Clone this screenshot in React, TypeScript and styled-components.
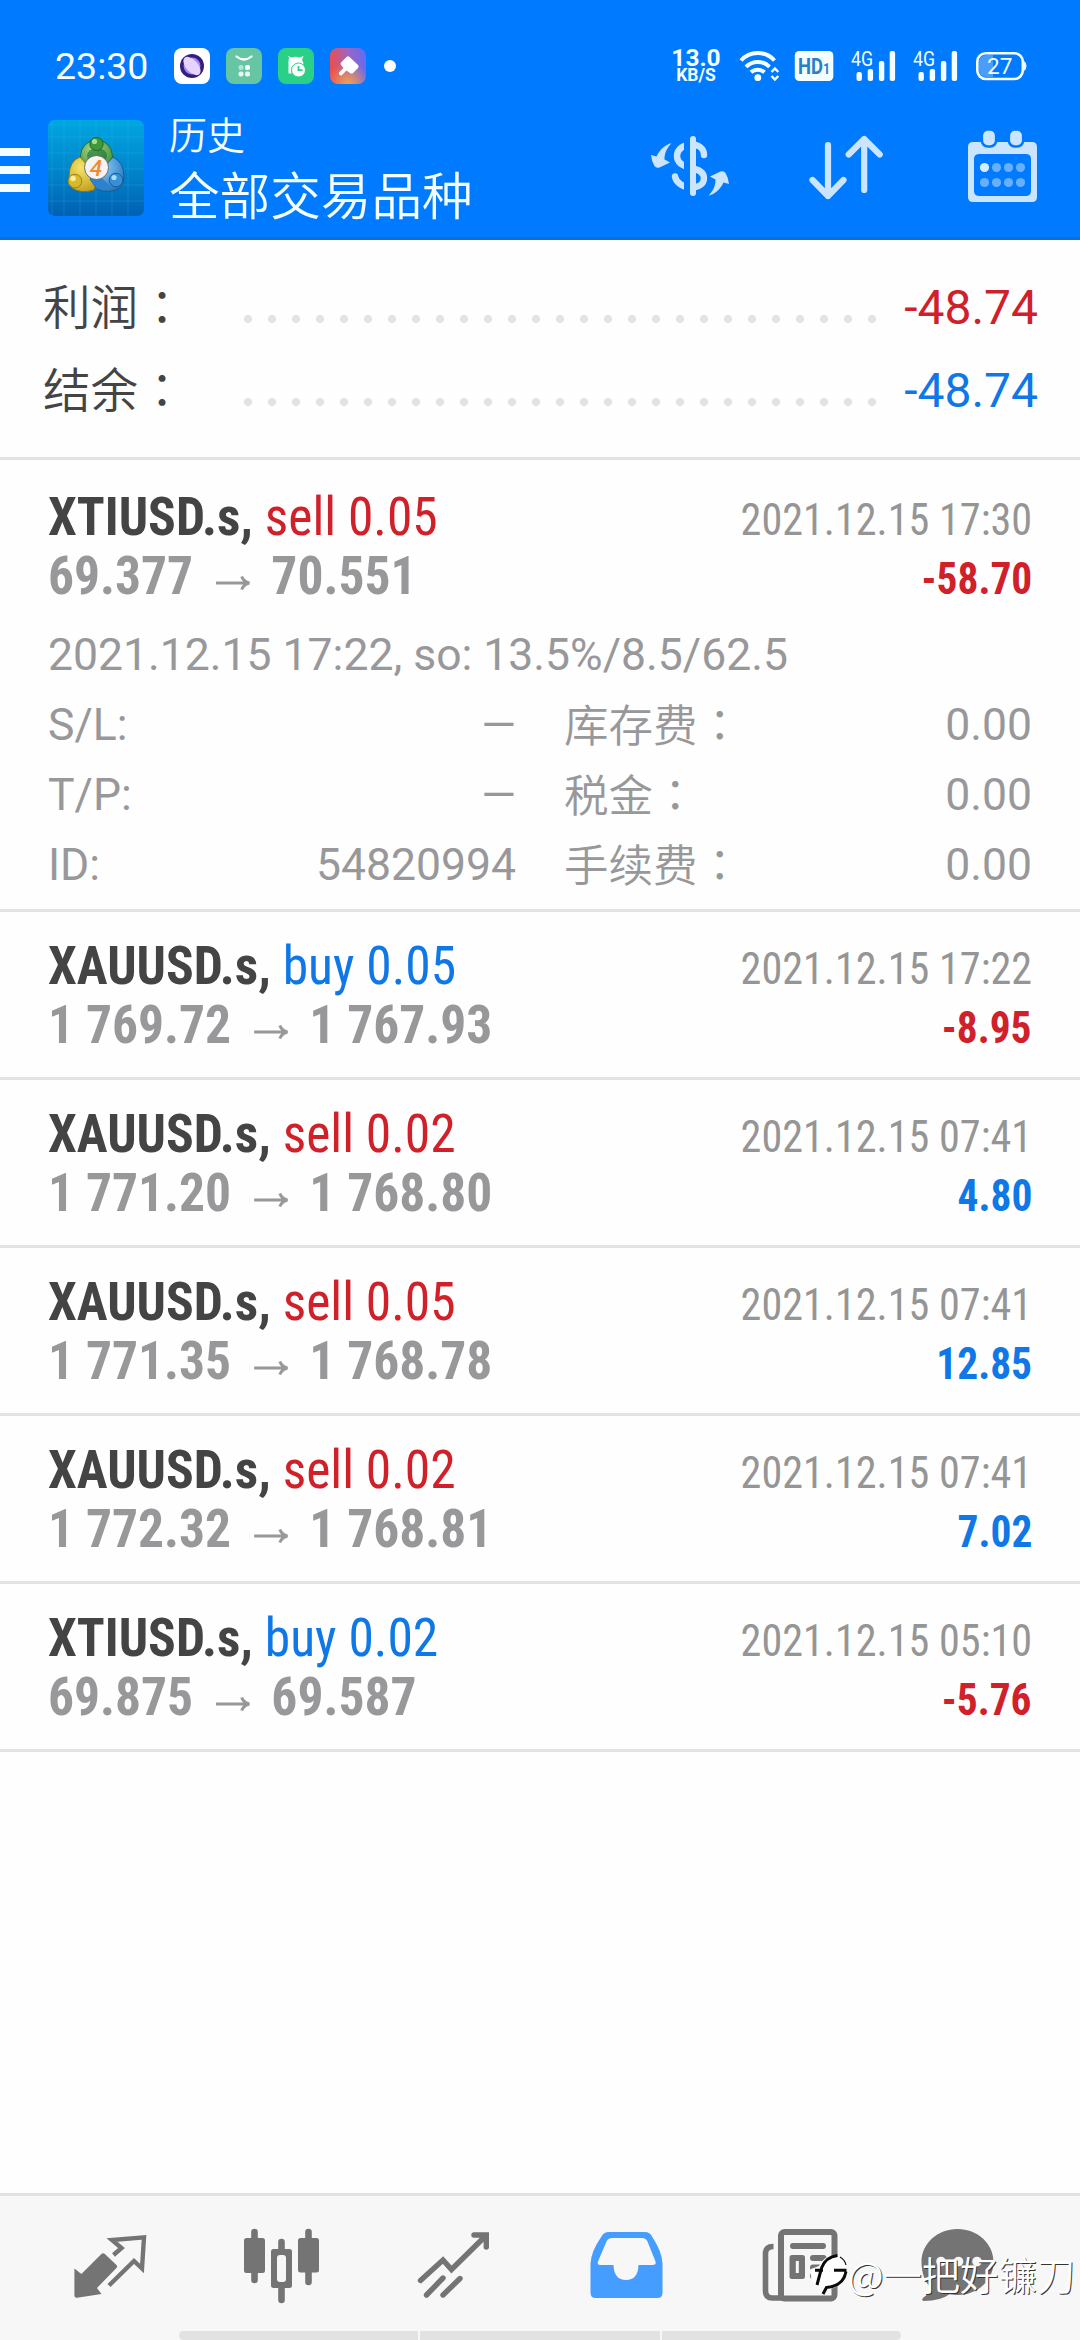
import React from "react";
import styled, { createGlobalStyle } from "styled-components";

const RED = "#d0202a";
const BLUE = "#0f78e6";
const PALE = "#cce5ff";
const NAV = "#747474";

const GlobalStyle = createGlobalStyle`
  * { box-sizing: border-box; }
  html, body { margin: 0; padding: 0; background: #fefefe; }
  body { font-family: Roboto, "Noto Sans CJK SC", sans-serif; }
  svg { display: block; flex: none; }
`;

const Screen = styled.div`
  position: relative;
  display: flex;
  flex-direction: column;
  width: 1080px;
  height: 2340px;
  overflow: hidden;
  background: #fefefe;
`;

const Header = styled.header`
  height: 240px;
  background: #007aff;
  border-bottom: 3px solid #0b6fdc;
  color: #f4fdff;
`;

const StatusBar = styled.div`
  display: flex;
  align-items: center;
  height: 108px;
  padding: 24px 0 0 55px;
`;

const Clock = styled.span`
  width: 119px;
  font-size: 37.5px;
  line-height: 84px;
`;

const NetSpeed = styled.div`
  display: flex;
  flex-direction: column;
  align-items: center;
  width: 50px;
  margin-left: auto;
  font-weight: 700;
  font-size: 24.5px;
  line-height: 18px;

  small {
    font-size: 17.5px;
    line-height: 17px;
  }
`;

const TitleBar = styled.div`
  display: flex;
  height: 129px;
`;

const MenuButton = styled.div`
  display: flex;
  flex-direction: column;
  gap: 10px;
  width: 48px;
  padding-top: 40px;
`;

const MenuLine = styled.i`
  width: 30px;
  height: 8px;
  background: #f4fdff;
`;

const LogoSlot = styled.div`
  padding-top: 12px;
`;

const TitleGroup = styled.div`
  display: flex;
  flex-direction: column;
  margin-left: 25px;
  flex: 1;
`;

const Caption = styled.span`
  font: 350 38px/50px "Noto Sans CJK SC", sans-serif;
`;

const Title = styled.span`
  font: 350 50.6px/66px "Noto Sans CJK SC", sans-serif;
  margin-top: 2px;
`;

const Summary = styled.section`
  height: 220px;
  padding: 26px 42px 0 43px;
  border-bottom: 3px solid #e3e3e3;
`;

const SummaryRow = styled.div`
  display: flex;
  align-items: center;
  height: 83px;
`;

const SummaryLabel = styled.span`
  width: 193px;
  padding-bottom: 6px;
  font: 350 47.6px/77px "Noto Sans CJK SC", sans-serif;
  color: #444;
`;

const Colon = styled.span`
  font-family: "Noto Sans CJK TC", sans-serif;
`;

const Leader = styled.i`
  width: 648px;
  height: 24px;
  margin-top: 23px;
  background: radial-gradient(circle at center, #e3e3e3 3.6px, transparent 4.4px) 0 0 / 24px 24px;
`;

const SummaryValue = styled.span<{ $color: string }>`
  flex: 1;
  text-align: right;
  font-size: 48px;
  line-height: 83px;
  color: ${(p) => p.$color};
`;

const Deal = styled.article<{ $first?: boolean }>`
  height: ${(p) => (p.$first ? 452 : 168)}px;
  padding: ${(p) => (p.$first ? 27 : 24)}px 48px 0;
  border-bottom: 3px solid #e3e3e3;
`;

const DealLine = styled.div`
  display: flex;
  justify-content: space-between;
  height: 59px;
  font-family: "Roboto Condensed", Roboto, sans-serif;
  font-stretch: 75%;
  font-size: 54px;
  line-height: 59px;
  white-space: pre;
`;

const Heading = styled.span`
  transform: scaleX(0.954);
  transform-origin: left;
`;

const Symbol = styled.span`
  font-weight: 700;
  color: #444;
`;

const Side = styled.span<{ $color: string }>`
  font-weight: 430;
  font-kerning: none;
  color: ${(p) => p.$color};
`;

const Prices = styled(Heading)`
  display: flex;
  align-items: center;
  font-weight: 700;
  color: #98989b;

  svg { margin: 14px 22px 0 24px; }
`;

const Stamp = styled.span`
  padding-top: 3px;
  font-size: 45px;
  color: #959595;
  transform: scaleX(0.937);
  transform-origin: right;
`;

const Profit = styled(Stamp)<{ $color: string }>`
  font-weight: 700;
  color: ${(p) => p.$color};
  transform: scaleX(0.92);
`;

const Comment = styled.div`
  margin-top: 15px;
  font-size: 44.5px;
  line-height: 70px;
  color: #98989a;
`;

const Details = styled.div`
  display: grid;
  grid-template-columns: 1fr 1fr;
  column-gap: 48px;
`;

const Detail = styled.div`
  display: flex;
  justify-content: space-between;
  height: 70px;
  font-size: 44.5px;
  line-height: 70px;
  color: #98989a;
`;

const CjkLabel = styled.span`
  font-weight: 350;
  line-height: 65px;
`;

const Footer = styled.footer`
  display: flex;
  flex-direction: column;
  justify-content: space-between;
  height: 147px;
  margin-top: auto;
  border-top: 3px solid #e1e1e1;
  background: #f7f7f7;
`;

const Tabs = styled.nav`
  display: grid;
  grid-template-columns: repeat(6, 172px);
  padding: 24px 0 0 24px;
`;

const GestureBar = styled.div`
  display: flex;
  gap: 2px;
  width: 722px;
  height: 9px;
  margin-left: 179px;

  i { flex: 1; background: #e2e2e2; }
  i:first-child { border-radius: 5px 0 0 5px; }
  i:last-child { border-radius: 0 5px 5px 0; }
`;

const Watermark = styled.div`
  position: absolute;
  right: 5px;
  bottom: 36px;
  display: flex;
  align-items: center;
  font: 350 38.3px/60px "Noto Sans CJK SC", sans-serif;
  color: #fff;
  text-shadow: 1px 1px 0 #333;
`;

/* Icons are drawn on the screen's own 1080 x 2340 grid: box = "x y w h". */
function Glyph({ box, children }: { box: string; children: React.ReactNode }) {
  const [, , w, h] = box.split(" ");
  return (
    <svg viewBox={box} width={w} height={h} fill="none">
      {children}
    </svg>
  );
}

function NotificationIcons() {
  return (
    <Glyph box="174 46 226 40">
      <defs>
        <linearGradient id="pin" x1="0" y1="0.2" x2="1" y2="0">
          <stop offset="0" stopColor="#ea4f50" />
          <stop offset="0.5" stopColor="#9a66c4" />
          <stop offset="1" stopColor="#5b6cf8" />
        </linearGradient>
        <radialGradient id="pinGlow" cx="0.5" cy="1" r="0.6">
          <stop offset="0" stopColor="#f0a24c" />
          <stop offset="1" stopColor="#f0a24c" stopOpacity="0" />
        </radialGradient>
      </defs>
      <rect x="174" y="48" width="36" height="36" rx="8" fill="#fff" />
      <circle cx="192" cy="66" r="12" fill="#34207a" />
      <circle cx="192" cy="66" r="8.400" fill="#a98af2" />
      <ellipse cx="192" cy="66" rx="11" ry="6" transform="rotate(48 192 66)" fill="#e6d4ff" />
      <rect x="226" y="48" width="36" height="36" rx="8" fill="#66c6a4" />
      <path d="M236.500 56.500q7.500 6 15 0" stroke="#fff" strokeWidth="2.200" strokeLinecap="round" />
      <rect x="238.500" y="65" width="5" height="5" rx="2" fill="#b5e4d2" />
      <rect x="245" y="65" width="5" height="5" rx="2" fill="#fff" />
      <rect x="238.500" y="71.500" width="5" height="5" rx="2" fill="#e9f8f2" />
      <rect x="245" y="71.500" width="5" height="5" rx="2" fill="#e9f8f2" />
      <rect x="278" y="48" width="36" height="36" rx="8" fill="#2bd087" />
      <path d="M287.500 56l4 1.500q4-1.500 8 0l4-1.500-1.500 4q1.500 2 1.500 4.500l-5 .5q-4.500 1-5.500 5h-1.500v3.500h-3v-12.500q0-2 1-3z" fill="#fff" />
      <circle cx="298.500" cy="70" r="7" fill="#fff" stroke="#2bd087" strokeWidth="1" />
      <path d="M298.500 66v4.200h4" stroke="#2bd087" strokeWidth="1.800" />
      <rect x="330" y="48" width="36" height="36" rx="8" fill="url(#pin)" />
      <rect x="330" y="48" width="36" height="36" rx="8" fill="url(#pinGlow)" />
      <path d="M346.500 57q1.500-1.500 3 0l8.500 8q1.500 1.500 0 3l-5 5q-1.500 1-3 0l-3.500-2.500-5 5q-3 0-2.500-3l4.500-4.500-2.500-3q-1-1 0-2.500z" fill="#fff" />
      <circle cx="390" cy="66" r="6" fill="#fff" />
    </Glyph>
  );
}

function Signal({ dx }: { dx: number }) {
  return (
    <g transform={`translate(${dx} 0)`} fill="#f4fdff">
      <text x="851" y="66" fontSize="20" textLength="22" lengthAdjust="spacingAndGlyphs">4G</text>
      <rect x="856.500" y="72" width="5.400" height="9" rx="2" />
      <rect x="867.700" y="69" width="5.400" height="12" rx="2" />
      <rect x="878.900" y="61" width="5.400" height="20" rx="2" />
      <rect x="889.700" y="51" width="5.400" height="30" rx="2" />
    </g>
  );
}

function RadioIcons() {
  return (
    <Glyph box="721 46 359 40">
      <g stroke="#f4fdff" strokeWidth="4">
        <path d="M741 60.500a22.500 22.500 0 0 1 33.500 0M746 66.800a16.500 16.500 0 0 1 23.500 0M751 72.300a10 10 0 0 1 13.500 0" />
        <path d="M771.500 72l3.400-3.600 3.400 3.600M771.500 76l3.400 3.600 3.400-3.600" strokeWidth="2.400" />
      </g>
      <circle cx="757.800" cy="77.700" r="3.400" fill="#f4fdff" />
      <rect x="794.800" y="51" width="38.500" height="30" rx="4.500" fill="#f4fdff" />
      <text x="798" y="74" fontSize="22.500" fontWeight="700" fill="#2a7fc8" textLength="32" lengthAdjust="spacingAndGlyphs">
        HD<tspan fontSize="15">1</tspan>
      </text>
      <Signal dx={0} />
      <Signal dx={62} />
      <path d="M987 55h6v22h-6q-8 0-8-8v-6q0-8 8-8z" fill="#4a9dfb" />
      <rect x="977.300" y="53.200" width="45.500" height="25.800" rx="8.500" stroke="#f4fdff" strokeWidth="2.600" />
      <path d="M1023.500 61q2.500 1.500 2.500 5t-2.500 5z" fill="#f4fdff" stroke="#f4fdff" />
      <text x="987" y="73.500" fontSize="22.500" fill="#f4fdff">27</text>
    </Glyph>
  );
}

function Logo() {
  const lines = [52, 64, 80, 96, 112, 128];
  return (
    <Glyph box="48 120 96 96">
      <defs>
        <linearGradient id="lbg" x1="0" y1="0" x2="0" y2="1">
          <stop offset="0" stopColor="#00a6e2" />
          <stop offset="0.5" stopColor="#0087cc" />
          <stop offset="1" stopColor="#0060b4" />
        </linearGradient>
        <radialGradient id="lg" cx="0.4" cy="0.3" r="0.8">
          <stop offset="0" stopColor="#a9d890" /><stop offset="1" stopColor="#2f8a2e" />
        </radialGradient>
        <radialGradient id="ly" cx="0.4" cy="0.3" r="0.8">
          <stop offset="0" stopColor="#f5e468" /><stop offset="1" stopColor="#c09a18" />
        </radialGradient>
        <radialGradient id="lb" cx="0.4" cy="0.3" r="0.8">
          <stop offset="0" stopColor="#8accf8" /><stop offset="1" stopColor="#1a6cba" />
        </radialGradient>
      </defs>
      <rect x="48" y="120" width="96" height="96" rx="7" fill="url(#lbg)" />
      <g stroke="#3fc0ee" strokeOpacity="0.22" strokeWidth="1">
        {lines.map((v) => (
          <path key={v} d={`M${v} 120v96M48 ${v + 73}h96`} />
        ))}
      </g>
      <ellipse cx="96.500" cy="156" rx="16" ry="16" fill="url(#lg)" stroke="#2a6b2c" />
      <ellipse cx="97" cy="156" rx="10" ry="8" fill="#156a2c" opacity="0.6" />
      <path d="M80 157q-11 4-11 20 0 6 3 11 9 6 22 2l5-12z" fill="url(#ly)" stroke="#8d7418" />
      <path d="M113 157q11 5 11 20 0 6-3 10-12 8-24 2l-7-10 14-12z" fill="url(#lb)" stroke="#1c5c94" />
      <path d="M97 189l-7-10 10-3 12 12z" fill="#2c82cc" />
      <circle cx="96.500" cy="144" r="6.600" fill="#3c9a3c" stroke="#226626" />
      <circle cx="94.500" cy="141.500" r="2.600" fill="#a6dd92" />
      <circle cx="75" cy="181" r="6.800" fill="#d8b92c" stroke="#a08519" />
      <circle cx="73" cy="178.500" r="2.800" fill="#fbf09a" />
      <circle cx="116" cy="180" r="6.800" fill="#3590d6" stroke="#1c5c94" />
      <circle cx="114" cy="177.500" r="2.600" fill="#a5dcff" />
      <circle cx="96.500" cy="167.500" r="12" fill="#f6f4f2" stroke="#555" strokeWidth="0.800" />
      <text x="96" y="175.500" textAnchor="middle" fontSize="22.500" fontStyle="italic" fontWeight="500" fill="#f08a34">4</text>
    </Glyph>
  );
}

function Actions() {
  const swap =
    "M651 155l5.500 1.500c3.500-7.500 9.500-12 15-13.200-5.500 5.700-7 10.700-7 16.200l5.500 3-10.500 5q-3.500 1-5-1.500-3-5-3.500-11z";
  return (
    <Glyph box="640 108 440 110">
      <g fill={PALE}>
        <path d="M704 155c0-7-6-10.500-13-10.500s-14 4.500-14 11.500c0 8 7 10.500 14 12s13 3.500 13 10-6 9.500-13 9.500-15-4.500-16-11" fill="none" stroke={PALE} strokeWidth="6.400" strokeLinecap="round" />
        <path d="M684 138h6v58h-6z" fill="#007aff" />
        <path d="M693 139v54" stroke={PALE} strokeWidth="6" strokeLinecap="round" />
        <path d={swap} />
        <path d={swap} transform="rotate(180 690 169.500)" />
      </g>
      <path d="M828 145v51M812.500 180L828 196l15.500-16M864.200 190v-51M848.700 154.500l15.500-15.500 15.500 15.500" stroke={PALE} strokeWidth="6.200" strokeLinecap="round" strokeLinejoin="round" />
      <path fillRule="evenodd" fill={PALE} d="M973 142h59q5 0 5 5v50q0 5-5 5h-59q-5 0-5-5v-50q0-5 5-5zM979.500 154q-5.500 0-5.500 5v32q0 5 5.500 5h46q5.500 0 5.500-5v-32q0-5-5.500-5z" />
      {[983, 1010].map((x) => (
        <rect key={x} x={x - 1.2} y="129.500" width="14.400" height="17" rx="6" fill={PALE} stroke="#007aff" strokeWidth="2.600" />
      ))}
      {[984.5, 996.5, 1008.5, 1020.5].map((x, i) => (
        <g key={x} fill="#66b0ff">
          <circle cx={x} cy="167.500" r="4.600" fill={i === 0 ? "#d6ecff" : "#66b0ff"} />
          <circle cx={x} cy="182.500" r="4.600" />
        </g>
      ))}
    </Glyph>
  );
}

function Arrow() {
  return (
    <svg width="36" height="16" viewBox="0 0 36 16" fill="none">
      <path d="M0 8h33M27 1.500q2 5 8 6.500-6 1.500-8 6.500" stroke="#98989b" strokeWidth="3.200" />
    </svg>
  );
}

function FooterTabs() {
  return (
    <Tabs>
      <Glyph box="24 2220 172 90">
        <path d="M113.500 2255l8-7-9.500-8 32-2.700-2 31.200-8-7.500-25 24.500" stroke={NAV} strokeWidth="4.400" />
        <path d="M74.400 2268.500l7 5.500 20-20q1.500-1.500 3.500 0l11.500 11q1.500 1.500 0 3L97 2288l4.500 6-24.500 3.800q-2.600 0-2.600-2.500z" fill={NAV} />
      </Glyph>
      <Glyph box="196 2220 172 90">
        <path d="M254.500 2232v48M281.500 2242v58M308.500 2232v50" stroke={NAV} strokeWidth="6.600" strokeLinecap="round" />
        <rect x="244" y="2238" width="21" height="35" rx="2.500" fill={NAV} />
        <rect x="298" y="2238" width="21" height="34.500" rx="2.500" fill={NAV} />
        <rect x="271" y="2249" width="21" height="39" rx="2.500" fill={NAV} />
        <rect x="277" y="2255" width="9" height="27" rx="3" fill="#f7f7f7" />
      </Glyph>
      <Glyph box="368 2220 172 90">
        <path d="M420.500 2280.500l22.500-20.500 8.500 9.500 34.500-34M474 2235h12.300v12M426.500 2295l16.500-17M443 2295l17-16.500" stroke={NAV} strokeWidth="5.400" strokeLinecap="round" strokeLinejoin="miter" />
      </Glyph>
      <Glyph box="540 2220 172 90">
        <path fillRule="evenodd" fill="#459eff" d="M609 2232h36q5 0 7 4.500 10 15 10.500 27v29q0 5.500-5 5.500h-62q-5 0-5-5.500v-29q.5-12 11-27 2-4.500 7.500-4.500zM612 2238q-4 0-5.500 3.500l-8.500 20q-1 3.500 2 3.500h13.500q.5 15 12.500 15t12.500-15h14q4 0 3-3.500l-8-20q-1.500-3.500-5.500-3.500z" />
      </Glyph>
      <Glyph box="712 2220 172 90">
        <rect x="781" y="2232" width="53.500" height="66.500" rx="3.500" stroke={NAV} strokeWidth="6" />
        <path d="M773.500 2246.500q-8 0-8 7v37.500q0 7 7 7h10" stroke={NAV} strokeWidth="5.600" />
        <path d="M793 2246h30M813 2258h10.500M813 2267.500h10.500M813 2276h10.500" stroke={NAV} strokeWidth="6" strokeLinecap="round" />
        <path fillRule="evenodd" fill={NAV} d="M792 2255h10.500q2.500 0 2.500 2.500v19q0 2.500-2.500 2.500H792q-2.500 0-2.500-2.500v-19q0-2.500 2.500-2.500zM795.800 2261v12h3v-12z" />
      </Glyph>
      <Glyph box="884 2220 172 90">
        <path fill={NAV} d="M957.500 2229c20 0 36 14.500 36 33s-16 33-36 33q-4 0-8-.7-9 6.700-25.500 6.700-3.500-.5-.5-3.500 6-4 7.500-9.500c-6-6-9.500-15-9.500-26 0-18.500 16-33 36-33z" />
        {[941, 958.5, 977].map((x) => (
          <circle key={x} cx={x} cy="2261.500" r="4.800" fill="#f7f7f7" />
        ))}
      </Glyph>
    </Tabs>
  );
}

function Brand() {
  return (
    <Glyph box="808 2257 38 48">
      <path d="M836 2262q-14 0-19 11l-8 3q-1 14 5 17l8 2-1 6 6-5q15-2 17-17 0-14-8-17z" fill="#fff" />
      <path d="M815 2292l4.500-17q4-11 16-12.500M813 2277.300h8M832 2277.300h12.500M821 2301l3.500-6.500q17-1.500 19.500-16" stroke="#0a0a0a" strokeWidth="3" />
      <path d="M838 2264q5 3 6 8" stroke="#0a0a0a" strokeWidth="1.200" />
    </Glyph>
  );
}

const deals = [
  { symbol: "XTIUSD.s", side: "sell", lots: "0.05", open: "69.377", close: "70.551", time: "2021.12.15 17:30", profit: "-58.70" },
  { symbol: "XAUUSD.s", side: "buy", lots: "0.05", open: "1 769.72", close: "1 767.93", time: "2021.12.15 17:22", profit: "-8.95" },
  { symbol: "XAUUSD.s", side: "sell", lots: "0.02", open: "1 771.20", close: "1 768.80", time: "2021.12.15 07:41", profit: "4.80" },
  { symbol: "XAUUSD.s", side: "sell", lots: "0.05", open: "1 771.35", close: "1 768.78", time: "2021.12.15 07:41", profit: "12.85" },
  { symbol: "XAUUSD.s", side: "sell", lots: "0.02", open: "1 772.32", close: "1 768.81", time: "2021.12.15 07:41", profit: "7.02" },
  { symbol: "XTIUSD.s", side: "buy", lots: "0.02", open: "69.875", close: "69.587", time: "2021.12.15 05:10", profit: "-5.76" },
];

const details: [string, string, boolean][] = [
  ["S/L:", "—", false],
  ["库存费", "0.00", true],
  ["T/P:", "—", false],
  ["税金", "0.00", true],
  ["ID:", "54820994", false],
  ["手续费", "0.00", true],
];

export default function App() {
  return (
    <Screen>
      <GlobalStyle />
      <Header>
        <StatusBar>
          <Clock>23:30</Clock>
          <NotificationIcons />
          <NetSpeed>
            13.0
            <small>KB/S</small>
          </NetSpeed>
          <RadioIcons />
        </StatusBar>
        <TitleBar>
          <MenuButton>
            <MenuLine />
            <MenuLine />
            <MenuLine />
          </MenuButton>
          <LogoSlot>
            <Logo />
          </LogoSlot>
          <TitleGroup>
            <Caption>历史</Caption>
            <Title>全部交易品种</Title>
          </TitleGroup>
          <Actions />
        </TitleBar>
      </Header>

      <Summary>
        <SummaryRow>
          <SummaryLabel>利润<Colon>：</Colon></SummaryLabel>
          <Leader />
          <SummaryValue $color={RED}>-48.74</SummaryValue>
        </SummaryRow>
        <SummaryRow>
          <SummaryLabel>结余<Colon>：</Colon></SummaryLabel>
          <Leader />
          <SummaryValue $color={BLUE}>-48.74</SummaryValue>
        </SummaryRow>
      </Summary>

      {deals.map((d, i) => (
        <Deal key={i} $first={i === 0}>
          <DealLine>
            <Heading>
              <Symbol>{d.symbol}, </Symbol>
              <Side $color={d.side === "buy" ? BLUE : RED}>{d.side} {d.lots}</Side>
            </Heading>
            <Stamp>{d.time}</Stamp>
          </DealLine>
          <DealLine>
            <Prices>
              {d.open}
              <Arrow />
              {d.close}
            </Prices>
            <Profit $color={d.profit.startsWith("-") ? RED : BLUE}>{d.profit}</Profit>
          </DealLine>
          {i === 0 && (
            <>
              <Comment>2021.12.15 17:22, so: 13.5%/8.5/62.5</Comment>
              <Details>
                {details.map(([label, value, cjk]) => (
                  <Detail key={label}>
                    {cjk ? <CjkLabel>{label}<Colon>：</Colon></CjkLabel> : <span>{label}</span>}
                    <span>{value}</span>
                  </Detail>
                ))}
              </Details>
            </>
          )}
        </Deal>
      ))}

      <Footer>
        <FooterTabs />
        <GestureBar>
          <i />
          <i />
          <i />
        </GestureBar>
      </Footer>
      <Watermark>
        <Brand />
        @一把好镰刀
      </Watermark>
    </Screen>
  );
}
